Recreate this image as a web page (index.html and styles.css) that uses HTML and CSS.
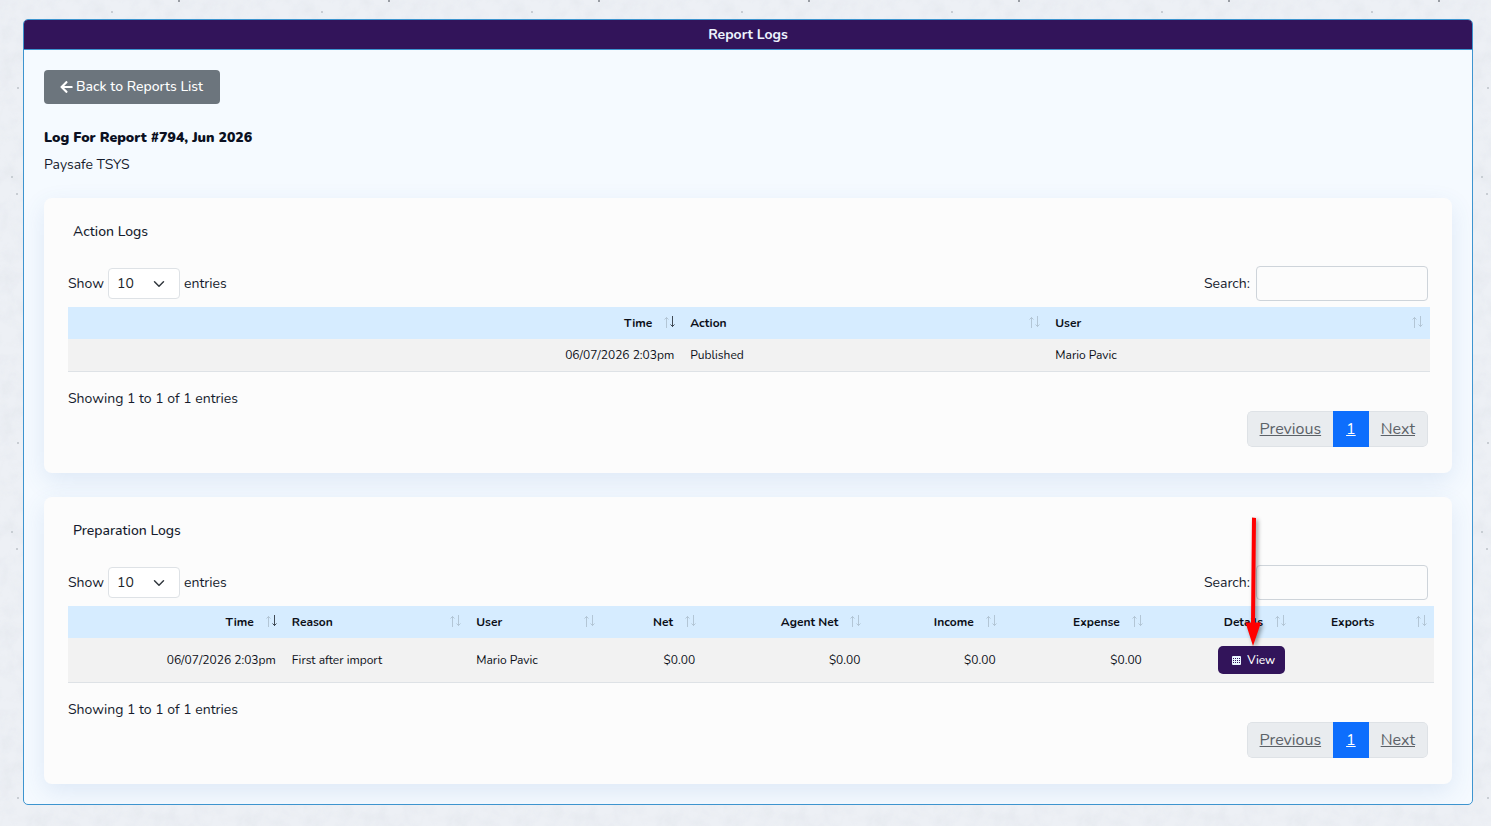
FILE: index.html
```html
<!DOCTYPE html>
<html lang="en">
<head>
    <meta charset="UTF-8">
    <meta name="viewport" content="width=device-width, initial-scale=1.0">
    <title>Report Logs</title>
    <link rel="stylesheet" href="styles.css">
</head>
<body>
    <main class="panel">
        <h1 class="panel-header">Report Logs</h1>
        <div class="panel-body">
            <a href="#" class="btn-back">
                <svg width="13" height="14" viewBox="0 0 448 512" aria-hidden="true"><path fill="currentColor" d="M257.500 445.100l-22.200 22.200c-9.400 9.400-24.600 9.400-33.900 0L7 273c-9.400-9.400-9.400-24.600 0-33.900L201.400 44.700c9.400-9.400 24.600-9.400 33.900 0l22.200 22.200c9.500 9.500 9.300 25-.4 34.300L136.600 216H424c13.300 0 24 10.700 24 24v32c0 13.300-10.700 24-24 24H136.600l120.500 114.800c9.800 9.300 10 24.800.4 34.300z"/></svg>
                Back to Reports List
            </a>

            <h2 class="report-title">Log For Report #794, Jun 2026</h2>
            <p class="report-name">Paysafe TSYS</p>

            <section class="card">
                <h3 class="card-title">Action Logs</h3>
                <div class="table-tools">
                    <label class="length">Show
                        <select name="action-length">
                            <option>10</option>
                            <option>25</option>
                            <option>50</option>
                            <option>100</option>
                        </select>
                        entries
                    </label>
                    <label class="search">Search: <input type="search" name="action-search"></label>
                </div>
                <table class="log-table action-table">
                    <thead>
                        <tr>
                            <th class="num sort-desc">Time</th>
                            <th>Action</th>
                            <th>User</th>
                        </tr>
                    </thead>
                    <tbody>
                        <tr>
                            <td class="num">06/07/2026 2:03pm</td>
                            <td>Published</td>
                            <td>Mario Pavic</td>
                        </tr>
                    </tbody>
                </table>
                <p class="table-info">Showing 1 to 1 of 1 entries</p>
                <nav class="pagination" aria-label="Action logs pages">
                    <a href="#">Previous</a>
                    <a href="#" class="active">1</a>
                    <a href="#">Next</a>
                </nav>
            </section>

            <section class="card">
                <h3 class="card-title">Preparation Logs</h3>
                <div class="table-tools">
                    <label class="length">Show
                        <select name="preparation-length">
                            <option>10</option>
                            <option>25</option>
                            <option>50</option>
                            <option>100</option>
                        </select>
                        entries
                    </label>
                    <label class="search">Search: <input type="search" name="preparation-search"></label>
                </div>
                <table class="log-table preparation-table">
                    <colgroup>
                        <col class="col-time">
                        <col class="col-reason">
                        <col class="col-user">
                        <col class="col-net">
                        <col class="col-agent">
                        <col class="col-income">
                        <col class="col-expense">
                        <col class="col-details">
                        <col class="col-exports">
                    </colgroup>
                    <thead>
                        <tr>
                            <th class="num sort-desc">Time</th>
                            <th>Reason</th>
                            <th>User</th>
                            <th class="num">Net</th>
                            <th class="num">Agent Net</th>
                            <th class="num">Income</th>
                            <th class="num">Expense</th>
                            <th class="num">Details</th>
                            <th class="center">Exports</th>
                        </tr>
                    </thead>
                    <tbody>
                        <tr>
                            <td class="num">06/07/2026 2:03pm</td>
                            <td>First after import</td>
                            <td>Mario Pavic</td>
                            <td class="num">$0.00</td>
                            <td class="num">$0.00</td>
                            <td class="num">$0.00</td>
                            <td class="num">$0.00</td>
                            <td class="num">
                                <div class="view-wrap">
                                    <button type="button" class="btn-view">
                                        <svg width="9" height="9" viewBox="0 0 9 9" aria-hidden="true"><rect width="9" height="9" rx="1" fill="#eaf6ff"/><path d="M1 2.500h7M1 4.500h7M1 6.500h7" stroke="#32145a" stroke-dasharray="1 1"/></svg>
                                        View
                                    </button>
                                    <svg class="pointer" width="36" height="140" viewBox="0 0 36 140" aria-hidden="true"><path fill="#ff0000" d="M16 5.500L20 6L19 110.500H25L17 134L9.500 110.500H15z"/></svg>
                                </div>
                            </td>
                            <td></td>
                        </tr>
                    </tbody>
                </table>
                <p class="table-info">Showing 1 to 1 of 1 entries</p>
                <nav class="pagination" aria-label="Preparation logs pages">
                    <a href="#">Previous</a>
                    <a href="#" class="active">1</a>
                    <a href="#">Next</a>
                </nav>
            </section>
        </div>
    </main>
</body>
</html>
```
FILE: styles.css
```css
* {
    box-sizing: border-box;
}

body {
    margin: 0;
    padding: 19px 18px 22px 23px;
    font-family: "Nunito", "Open Sans", sans-serif;
    font-size: 14px;
    line-height: 20px;
    color: #151b2d;
    background-color: #edf0f5;
    /* concrete-like texture: soft noise with a few specks */
    background-image: url("data:image/svg+xml,%3Csvg xmlns='http://www.w3.org/2000/svg' width='210' height='355'%3E%3Cfilter id='n' x='0' y='0' width='100%25' height='100%25'%3E%3CfeTurbulence type='fractalNoise' baseFrequency='.06' numOctaves='4' stitchTiles='stitch'/%3E%3CfeColorMatrix values='0 0 0 0 .6 0 0 0 0 .64 0 0 0 0 .7 .4 0 0 0 -.16'/%3E%3C/filter%3E%3Crect width='210' height='355' filter='url(%23n)'/%3E%3Cg fill='%237d8288'%3E%3Ccircle cx='179' cy='1' r='1'/%3E%3C/g%3E%3Cg fill='%23bcc2c8'%3E%3Ccircle cx='18' cy='88' r='1'/%3E%3Ccircle cx='112' cy='12' r='1'/%3E%3Ccircle cx='12' cy='177' r='1'/%3E%3Ccircle cx='17' cy='194' r='1'/%3E%3C/g%3E%3C/svg%3E");
}

h1, h2, h3, p {
    margin: 0;
}

.panel {
    border: 1px solid #3d94cf;
    border-radius: 5px;
    background-color: #f5faff;
    overflow: hidden;
}

.panel-header {
    padding: 5px 0 4px;
    border-bottom: 1px solid #3d94cf;
    background-color: #32145a;
    color: #eef4ff;
    font-size: 14px;
    font-weight: 700;
    text-align: center;
}

.panel-body {
    padding: 20px;
}

.btn-back {
    display: inline-flex;
    align-items: center;
    gap: 3px;
    height: 34px;
    padding: 0 17px 0 16px;
    border-radius: 4px;
    background-color: #6c757d;
    color: #fff;
    font-weight: 500;
    text-decoration: none;
}

.report-title {
    margin-top: 24px;
    font-size: 14px;
    font-weight: 900;
    color: #0b1022;
}

.report-name {
    margin: 7px 0 23px;
}

.card {
    padding: 24px 24px 26px;
    border-radius: 8px;
    background-color: #fcfcfc;
    box-shadow: 0 8px 24px rgba(60, 110, 180, 0.12);
}

.card + .card {
    margin-top: 24px;
}

.card-title {
    margin: 0 5px 24px;
    font-size: 14px;
    font-weight: 500;
}

.table-tools {
    display: flex;
    justify-content: space-between;
    align-items: center;
    margin-bottom: 6px;
}

.length, .search {
    display: flex;
    align-items: center;
    gap: 4px;
}

.search {
    gap: 6px;
}

.length select {
    appearance: none;
    width: 72px;
    height: 31px;
    padding: 0 8px;
    border: 1px solid #dee2e6;
    border-radius: 4px;
    background: #fff url("data:image/svg+xml,%3Csvg xmlns='http://www.w3.org/2000/svg' viewBox='0 0 16 16'%3E%3Cpath fill='none' stroke='%23343a40' stroke-linecap='round' stroke-linejoin='round' stroke-width='2' d='m2 5 6 6 6-6'/%3E%3C/svg%3E") no-repeat right 14px center / 12px 12px;
    color: #212529;
    font: inherit;
}

.search input {
    width: 172px;
    height: 35px;
    padding: 4px 8px;
    border: 1px solid #ced4da;
    border-radius: 4px;
    background-color: transparent;
    font: inherit;
}

.log-table {
    width: calc(100% + 2px);
    border-collapse: collapse;
    table-layout: fixed;
    font-size: 12px;
    line-height: 16px;
    color: #0c0f18;
}

.preparation-table {
    width: calc(100% + 6px);
}

.log-table th, .log-table td {
    padding: 8px;
    text-align: left;
}

.log-table th {
    padding-right: 30px;
    background: #d6ecff url("data:image/svg+xml,%3Csvg xmlns='http://www.w3.org/2000/svg' width='12' height='12'%3E%3Cpath fill='none' stroke='%23b3c6d6' d='M2.5 12V1M.5 3.500l2-2 2 2M8.500 0v11M6.500 8.500l2 2 2-2'/%3E%3C/svg%3E") no-repeat right 6px top 9px;
    font-weight: 700;
}

.log-table th.sort-desc {
    background-image: url("data:image/svg+xml,%3Csvg xmlns='http://www.w3.org/2000/svg' width='12' height='12'%3E%3Cpath fill='none' stroke='%23b3c6d6' d='M2.5 12V1M.5 3.500l2-2 2 2'/%3E%3Cpath fill='none' stroke='%23404a55' d='M8.500 0v11M6.500 8.500l2 2 2-2'/%3E%3C/svg%3E");
}

.log-table td {
    border-bottom: 1px solid #dee2e6;
    background-color: #f2f2f2;
}

.log-table .num {
    text-align: right;
}

.log-table .center {
    text-align: center;
}

.action-table th:nth-child(1) { width: 45.1%; }
.action-table th:nth-child(2) { width: 26.8%; }
.action-table th:nth-child(3) { width: 28.1%; }

.col-time { width: 15.8%; }
.col-reason { width: 13.5%; }
.col-user { width: 9.8%; }
.col-net { width: 7.4%; }
.col-agent { width: 12.1%; }
.col-income { width: 9.9%; }
.col-expense { width: 10.7%; }
.col-details { width: 10.5%; }
.col-exports { width: 10.3%; }

.view-wrap {
    position: relative;
    display: inline-block;
    vertical-align: top;
}

.btn-view {
    display: flex;
    align-items: center;
    gap: 6px;
    height: 28px;
    padding: 0 10px 0 14px;
    border: 0;
    border-radius: 5px;
    background-color: #32145a;
    color: #fff;
    font: inherit;
    font-weight: 500;
}

/* red pointer over the View button */
.pointer {
    position: absolute;
    left: 18px;
    bottom: 22px;
    filter: drop-shadow(2px 2px 2px rgba(0, 0, 0, 0.4));
    pointer-events: none;
}

.table-info {
    margin-top: 17px;
}

.pagination {
    display: flex;
    width: fit-content;
    margin: 2px 0 0 auto;
    border-radius: 5px;
    overflow: hidden;
    font-size: 16px;
    line-height: 24px;
}

.pagination a {
    padding: 5px 12px;
    border: 1px solid #dee2e6;
    border-right: 0;
    border-left: 0;
    background-color: #e9ecef;
    color: #5c6268;
}

.pagination a:first-child {
    border-left: 1px solid #dee2e6;
    border-radius: 5px 0 0 5px;
}

.pagination a:last-child {
    border-right: 1px solid #dee2e6;
    border-radius: 0 5px 5px 0;
}

.pagination a.active {
    padding: 5px 13px;
    border-color: #0d6efd;
    background-color: #0d6efd;
    color: #fff;
}
```
